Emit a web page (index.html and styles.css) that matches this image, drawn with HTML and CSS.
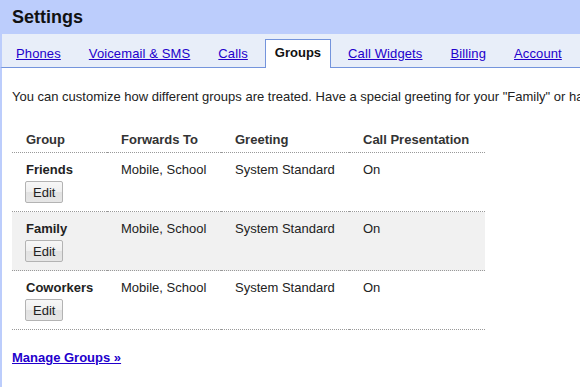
FILE: index.html
```html
<!DOCTYPE html>
<html lang="en">
<head>
    <meta charset="UTF-8">
    <meta name="viewport" content="width=device-width, initial-scale=1.0">
    <title>Settings - Groups</title>
    <link rel="stylesheet" href="styles.css">
</head>
<body>
    <div class="page-header">Settings</div>

    <ul class="tabs">
        <li class="tab"><a href="#">Phones</a></li>
        <li class="tab"><a href="#">Voicemail &amp; SMS</a></li>
        <li class="tab"><a href="#">Calls</a></li>
        <li class="tab active">Groups</li>
        <li class="tab"><a href="#">Call Widgets</a></li>
        <li class="tab"><a href="#">Billing</a></li>
        <li class="tab"><a href="#">Account</a></li>
    </ul>

    <div class="content">
        <p class="intro">You can customize how different groups are treated. Have a special greeting for your "Family" or have calls from "Coworkers" go straight to voicemail.</p>

        <table class="groups-table">
            <colgroup>
                <col class="col-group">
                <col class="col-forwards">
                <col class="col-greeting">
                <col class="col-presentation">
            </colgroup>
            <thead>
                <tr>
                    <th>Group</th>
                    <th>Forwards To</th>
                    <th>Greeting</th>
                    <th>Call Presentation</th>
                </tr>
            </thead>
            <tbody>
                <tr>
                    <td>
                        <div class="group-name">Friends</div>
                        <button class="edit-btn">Edit</button>
                    </td>
                    <td>Mobile, School</td>
                    <td>System Standard</td>
                    <td>On</td>
                </tr>
                <tr class="shaded">
                    <td>
                        <div class="group-name">Family</div>
                        <button class="edit-btn">Edit</button>
                    </td>
                    <td>Mobile, School</td>
                    <td>System Standard</td>
                    <td>On</td>
                </tr>
                <tr>
                    <td>
                        <div class="group-name">Coworkers</div>
                        <button class="edit-btn">Edit</button>
                    </td>
                    <td>Mobile, School</td>
                    <td>System Standard</td>
                    <td>On</td>
                </tr>
            </tbody>
        </table>

        <a class="manage-link" href="#">Manage Groups &raquo;</a>
    </div>
</body>
</html>
```

FILE: styles.css
```css
html, body {
    overflow: hidden;
}

body {
    margin: 0;
    font-family: 'Liberation Sans', Arial, sans-serif;
    font-size: 13px;
    line-height: 16px;
    color: #222;
    background: #fff;
}

a {
    color: #2200cc;
}

.page-header {
    height: 34px;
    line-height: 34px;
    padding-left: 12px;
    background-color: #bccdfc;
    font-size: 18px;
    font-weight: bold;
    color: #111;
}

.tabs {
    display: flex;
    align-items: flex-end;
    height: 33px;
    margin: 0;
    padding: 0 0 0 3px;
    list-style: none;
    background-color: #e8eef9;
    border-left: 2px solid #bccdfc;
    border-bottom: 1px solid #7494dc;
    white-space: nowrap;
    letter-spacing: 0.12px;
}

.tab {
    padding: 5px 10px 6px;
    margin-right: 6px;
    margin-bottom: -1px;
    border: 1px solid transparent;
    border-bottom: none;
}

.tab.active {
    background-color: #fff;
    border-color: #7494dc;
    font-weight: bold;
    color: #111;
    letter-spacing: 0;
    padding: 5px 9px 7px;
}

.content {
    border-left: 2px solid #bccdfc;
    padding: 21px 10px 40px;
}

.intro {
    margin: 0 0 19px;
    white-space: nowrap;
}

.groups-table {
    width: 473px;
    table-layout: fixed;
    border-collapse: separate;
    border-spacing: 0;
}

.col-group { width: 95px; }
.col-forwards { width: 114px; }
.col-greeting { width: 128px; }
.col-presentation { width: 136px; }

.groups-table th {
    text-align: left;
    font-weight: bold;
    color: #333;
    padding: 8px 14px 4px;
    border-bottom: 1px dotted #999;
}

.groups-table td {
    vertical-align: top;
    padding: 9px 14px 8px;
    border-bottom: 1px dotted #999;
}

.groups-table tr.shaded td {
    background-color: #f1f1f1;
}

.group-name {
    font-weight: bold;
}

.edit-btn {
    display: block;
    margin: 3px 0 0 -1px;
    height: 22px;
    padding: 0 7px;
    font-family: inherit;
    font-size: 13px;
    color: #222;
    border: 1px solid #b3b3b3;
    border-radius: 2px;
    background: linear-gradient(#f7f7f7 0%, #efefef 50%, #e2e2e2 51%, #e6e6e6 100%);
    cursor: pointer;
}

.manage-link {
    display: inline-block;
    margin-top: 20px;
    font-weight: bold;
}
```
